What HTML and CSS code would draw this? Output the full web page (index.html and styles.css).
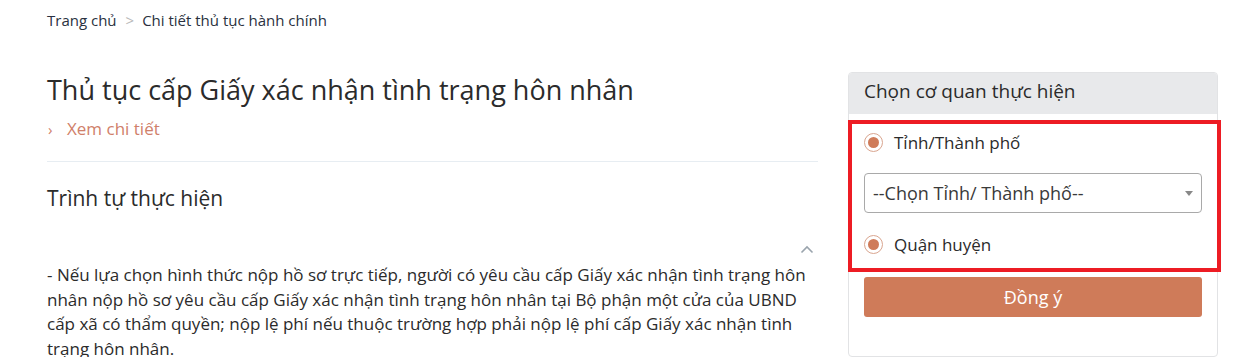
FILE: index.html
```html
<!DOCTYPE html>
<html lang="vi">
<head>
<meta charset="utf-8">
<link rel="stylesheet" href="styles.css">
</head>
<body>
<div class="page">
  <nav class="breadcrumb">
    <a class="crumb">Trang chủ</a>
    <span class="sep">&gt;</span>
    <a class="crumb">Chi tiết thủ tục hành chính</a>
  </nav>
  <div class="layout">
    <main class="main">
      <h1 class="title">Thủ tục cấp Giấy xác nhận tình trạng hôn nhân</h1>
      <a class="more"><span class="more-icon">›</span>Xem chi tiết</a>
      <hr class="divider">
      <h2 class="section-title">Trình tự thực hiện</h2>
      <div class="toggle-row">
        <svg class="toggle" width="14" height="9" viewBox="0 0 14 9"><path d="M1.5 7.5 L7 2 L12.5 7.5" fill="none" stroke="#9aa4ad" stroke-width="1.6"/></svg>
      </div>
      <p class="text">- Nếu lựa chọn hình thức nộp hồ sơ trực tiếp, người có yêu cầu cấp Giấy xác nhận tình trạng hôn nhân nộp hồ sơ yêu cầu cấp Giấy xác nhận tình trạng hôn nhân tại Bộ phận một cửa của UBND cấp xã có thẩm quyền; nộp lệ phí nếu thuộc trường hợp phải nộp lệ phí cấp Giấy xác nhận tình trạng hôn nhân.</p>
    </main>
    <aside class="panel">
      <div class="panel-head">Chọn cơ quan thực hiện</div>
      <div class="panel-body">
        <label class="radio"><span class="dot"></span>Tỉnh/Thành phố</label>
        <div class="select"><span>--Chọn Tỉnh/ Thành phố--</span><span class="caret"></span></div>
        <label class="radio"><span class="dot"></span>Quận huyện</label>
        <button class="btn">Đồng ý</button>
      </div>
      <div class="highlight"></div>
    </aside>
  </div>
</div>
</body>
</html>
```

FILE: styles.css
```css
* { box-sizing: border-box; }
html, body { margin: 0; padding: 0; background: #fff; }
body {
  font-family: "Open Sans", "Noto Sans", sans-serif;
  color: #2b2b2b;
  overflow: hidden;
}
.page { padding: 0 19px 0 47px; }
.breadcrumb {
  display: flex;
  align-items: center;
  gap: 9px;
  height: 40px;
  font-size: 15px;
  color: #2a3140;
}
.sep { color: #b9b9b9; margin-left: 0; margin-right: -1px; }
.layout {
  display: flex;
  gap: 30px;
  margin-top: 32px;
}
.main { width: 771px; flex: none; }
.title {
  margin: 0;
  font-size: 27px;
  font-weight: 400;
  line-height: 36px;
  color: #2b2b2b;
}
.more {
  display: flex;
  align-items: center;
  margin-top: 9px;
  font-size: 17px;
  line-height: 24px;
  color: #d0806a;
}
.more-icon { width: 20px; font-size: 15px; padding-left: 1px; }
.divider {
  margin: 20px 0 0;
  border: 0;
  border-top: 1px solid #e7edf2;
}
.section-title {
  margin: 22px 0 0;
  font-size: 21px;
  font-weight: 400;
  line-height: 28px;
  color: #2b2b2b;
}
.toggle-row {
  display: flex;
  justify-content: flex-end;
  padding-right: 4px;
  margin-top: 33px;
  height: 14px;
}
.text {
  margin: 4px 0 0;
  font-size: 17px;
  line-height: 24.5px;
  color: #2b2b2b;
}
.panel {
  position: relative;
  width: 370px;
  flex: none;
  border: 1px solid #e2e3e5;
  border-radius: 4px;
  height: 285px;
}
.panel-head {
  background: #e8e9eb;
  height: 41px;
  padding: 0 15px 5px;
  display: flex;
  align-items: center;
  font-size: 19px;
  color: #2b2b2b;
  border-radius: 3px 3px 0 0;
}
.panel-body { padding: 15px 15px; }
.radio {
  display: flex;
  align-items: center;
  gap: 11px;
  font-size: 17px;
  color: #2b2b2b;
  height: 26px;
  padding-left: 0;
}
.dot {
  width: 19px;
  height: 19px;
  border: 1px solid #d9a58f;
  border-radius: 50%;
  display: flex;
  align-items: center;
  justify-content: center;
}
.dot::after {
  content: "";
  width: 11px;
  height: 11px;
  border-radius: 50%;
  background: #cf7b59;
}
.select {
  margin-top: 18px;
  height: 40px;
  border: 1px solid #a9a9a9;
  border-radius: 4px;
  display: flex;
  align-items: center;
  justify-content: space-between;
  padding: 0 8px 0 8px;
  font-size: 18px;
  color: #3a3a3a;
}
.caret {
  width: 0; height: 0;
  border-left: 4px solid transparent;
  border-right: 4px solid transparent;
  border-top: 5px solid #888;
}
.select + .radio { margin-top: 18px; }
.btn {
  margin-top: 20px;
  width: 100%;
  height: 40px;
  border: 0;
  border-radius: 3px;
  background: #cf7b59;
  color: #fff;
  font-family: inherit;
  font-size: 18px;
}
.highlight {
  position: absolute;
  left: -1px;
  top: 47px;
  width: 373px;
  height: 152px;
  border: 4px solid #ed1c24;
  pointer-events: none;
}
```
